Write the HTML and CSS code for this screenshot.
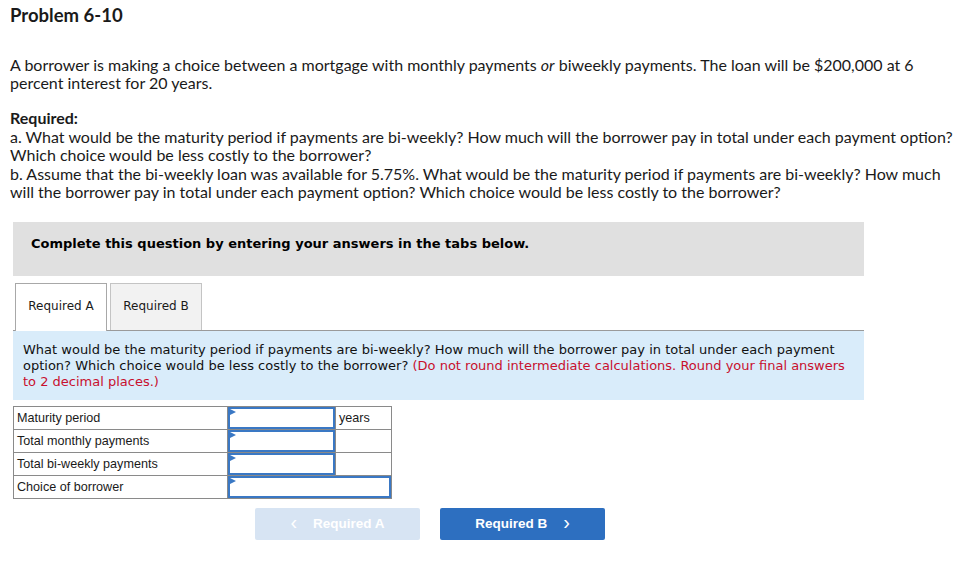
FILE: index.html
```html
<!DOCTYPE html>
<html>
<head>
<meta charset="utf-8">
<link rel="stylesheet" href="styles.css">
</head>
<body>
<div class="page">
  <h1 class="title">Problem 6-10</h1>
  <p class="intro">A borrower is making a choice between a mortgage with monthly payments <i>or</i> biweekly payments. The loan will be $200,000 at 6 percent interest for 20 years.</p>
  <div class="required">
    <div class="req-head">Required:</div>
    <div>a. What would be the maturity period if payments are bi-weekly? How much will the borrower pay in total under each payment option? Which choice would be less costly to the borrower?</div>
    <div>b. Assume that the bi-weekly loan was available for 5.75%. What would be the maturity period if payments are bi-weekly? How much will the borrower pay in total under each payment option? Which choice would be less costly to the borrower?</div>
  </div>

  <div class="notice">Complete this question by entering your answers in the tabs below.</div>

  <div class="tabs">
    <div class="tab active">Required A</div>
    <div class="tab">Required B</div>
  </div>

  <div class="qbox">What would be the maturity period if payments are bi-weekly? How much will the borrower pay in total under each payment option? Which choice would be less costly to the borrower? <span class="red">(Do not round intermediate calculations. Round your final answers to 2 decimal places.)</span></div>

  <table class="answers">
    <tr>
      <td class="lbl">Maturity period</td>
      <td class="inp"><div class="field"></div></td>
      <td class="unit">years</td>
    </tr>
    <tr>
      <td class="lbl">Total monthly payments</td>
      <td class="inp"><div class="field"></div></td>
      <td class="unit"></td>
    </tr>
    <tr>
      <td class="lbl">Total bi-weekly payments</td>
      <td class="inp"><div class="field"></div></td>
      <td class="unit"></td>
    </tr>
    <tr>
      <td class="lbl">Choice of borrower</td>
      <td class="inp" colspan="2"><div class="field"></div></td>
    </tr>
  </table>

  <div class="nav">
    <div class="btn prev"><span class="chev">&lsaquo;</span>Required A</div>
    <div class="btn next">Required B<span class="chev">&rsaquo;</span></div>
  </div>
</div>
</body>
</html>
```

FILE: styles.css
```css
html, body {
  margin: 0;
  padding: 0;
  background: #fff;
}
.page {
  padding: 0 0 0 10px;
  width: 955px;
  font-family: "Lato", "Open Sans", sans-serif;
  color: #1a1a1a;
}
.title {
  margin: 0;
  padding-top: 4px;
  font-size: 18.5px;
  line-height: 22px;
  font-weight: 700;
}
.intro {
  margin: 30px 0 0 0;
  font-size: 16px;
  line-height: 18px;
  width: 935px;
}
.required {
  margin-top: 17px;
  font-size: 16px;
  line-height: 18.5px;
  width: 952px;
}
.req-head {
  font-weight: 700;
}
.notice {
  margin: 20px 0 0 3px;
  width: 851px;
  height: 54px;
  box-sizing: border-box;
  background: #e0e0e0;
  padding: 13px 0 0 18px;
  font-family: "DejaVu Sans", Verdana, sans-serif;
  font-weight: 700;
  font-size: 13px;
  line-height: 18px;
  color: #000;
}
.tabs {
  margin: 7px 0 0 3px;
  width: 851px;
  display: flex;
  gap: 3px;
  padding-left: 2px;
  box-sizing: border-box;
  border-bottom: 1px solid #9a9a9a;
  height: 48px;
  align-items: flex-end;
}
.tab {
  width: 92px;
  height: 47px;
  box-sizing: border-box;
  border: 1px solid #c4c4c4;
  border-bottom: none;
  background: #f2f2f2;
  font-family: "DejaVu Sans", Verdana, sans-serif;
  font-size: 12px;
  color: #1a1a1a;
  display: flex;
  align-items: center;
  justify-content: center;
  padding-bottom: 2px;
}
.tab.active {
  background: #fff;
  height: 48px;
  margin-bottom: -1px;
  border-color: #a8a8a8;
}
.qbox {
  margin-left: 3px;
  width: 851px;
  box-sizing: border-box;
  background: #d9ecfa;
  padding: 11px 10px 10px 10px;
  font-family: "DejaVu Sans", Verdana, sans-serif;
  font-size: 13px;
  line-height: 16px;
  color: #111;
}
.red {
  color: #c8102e;
}
.answers {
  margin: 6px 0 0 3px;
  border-collapse: collapse;
  font-family: "Liberation Sans", Arial, sans-serif;
  font-size: 12.6px;
  color: #1a1a1a;
}
.answers td {
  border: 1px solid #8a8a8a;
  height: 22px;
  padding: 0;
  box-sizing: border-box;
}
.lbl {
  width: 214px;
  padding-left: 3px !important;
}
.inp {
  width: 108px;
  position: relative;
}
.unit {
  width: 56px;
  padding-left: 3px !important;
}
.field {
  height: 22px;
  box-sizing: border-box;
  border: 2px solid #3a78c4;
  position: relative;
}
.field::before {
  content: "";
  position: absolute;
  left: 0;
  top: 0;
  border-left: 6px solid #3a78c4;
  border-top: 3px solid transparent;
  border-bottom: 3px solid transparent;
}
.nav {
  margin: 9px 0 0 245px;
  display: flex;
  gap: 20px;
}
.btn {
  width: 165px;
  height: 32px;
  border-radius: 2px;
  display: flex;
  align-items: center;
  justify-content: center;
  font-family: "Liberation Sans", Arial, sans-serif;
  font-weight: 700;
  font-size: 13.5px;
  color: #fff;
}
.prev {
  background: #d7e4f3;
}
.next {
  background: #2d6fc0;
}
.chev {
  font-size: 20px;
  font-weight: 400;
  line-height: 20px;
  margin-top: -3px;
}
.prev .chev {
  margin-right: 16px;
}
.next .chev {
  margin-left: 16px;
}
```
